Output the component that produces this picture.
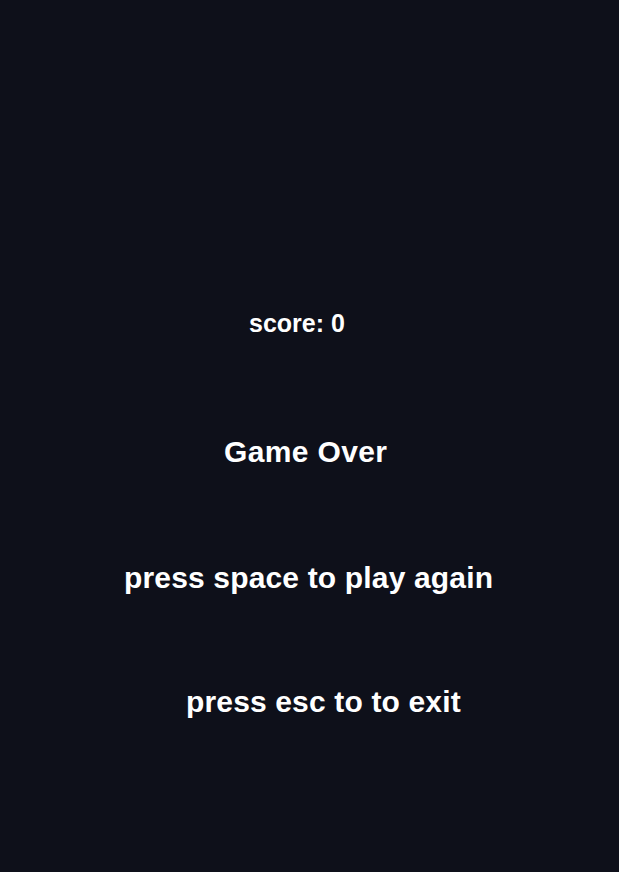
const lines = [
  { text: 'score: 0', cls: 'mt-[311px] pl-[249px] text-[25px]' },
  { text: 'Game Over', cls: 'mt-[101px] pl-[224px] text-[30px] tracking-[0.35px]' },
  { text: 'press space to play again', cls: 'mt-[96px] pl-[124px] text-[30px] tracking-[0.16px]' },
  { text: 'press esc to to exit', cls: 'mt-[94px] pl-[186px] text-[30px] tracking-[0.15px]' },
];

export default function App() {
  return (
    <div
      className="w-[619px] h-[872px] bg-[#0e101a] text-white font-bold overflow-hidden"
      style={{ fontFamily: '"Liberation Sans", Arial, sans-serif' }}
    >
      {lines.map(l => (
        <p key={l.text} className={`leading-none whitespace-nowrap ${l.cls}`}>
          {l.text}
        </p>
      ))}
    </div>
  );
}
